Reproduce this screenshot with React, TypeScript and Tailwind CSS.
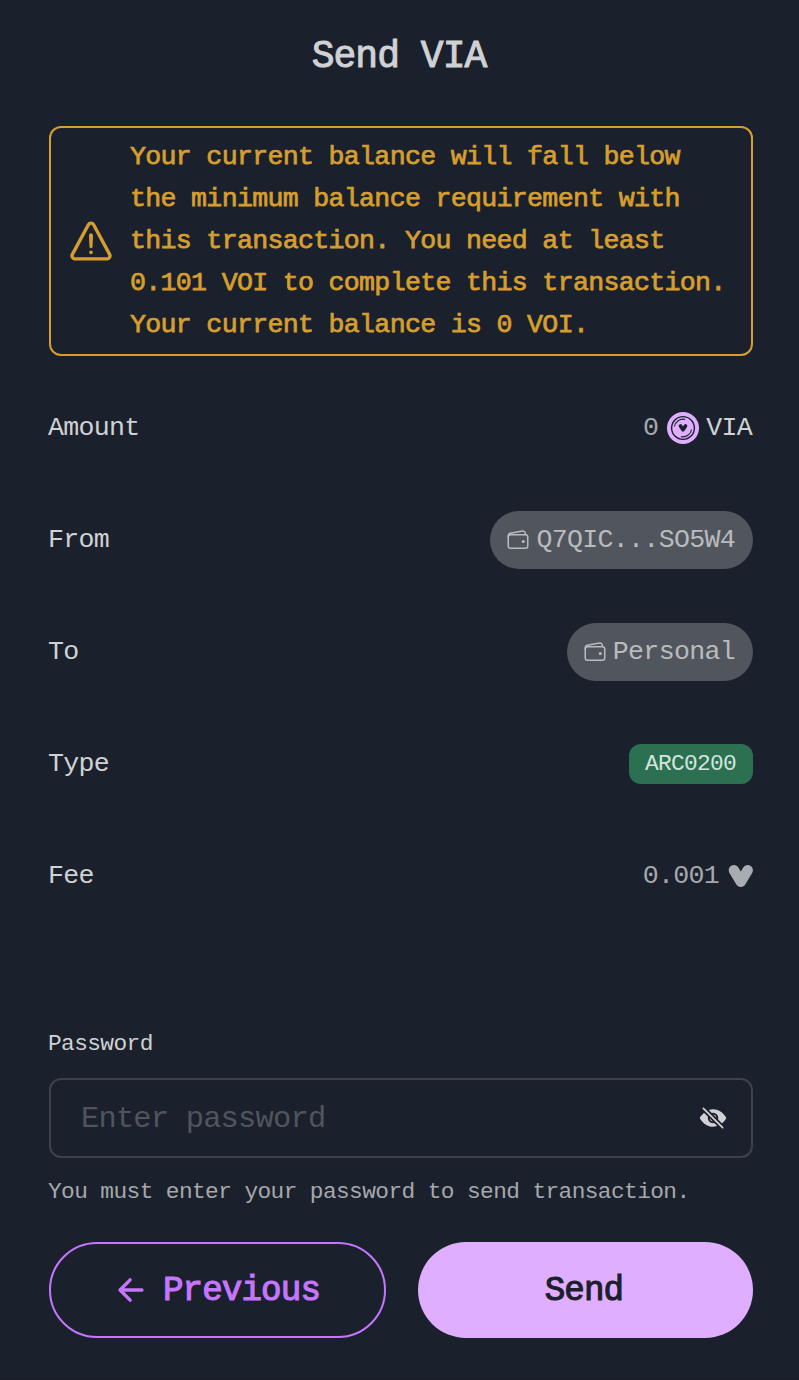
import type { ReactNode } from 'react';
import { IoArrowBackOutline, IoEyeOff, IoWalletOutline, IoWarningOutline } from 'react-icons/io5';

function Row({ label, children }: { label: string; children: ReactNode }) {
  return (
    <div className="flex h-[112px] items-center justify-between text-[26.6px] tracking-[-0.0258em]">
      <span className="-ml-px pt-0.5 text-[#d0d1d4]">{label}</span>
      <div className="flex items-center">{children}</div>
    </div>
  );
}

function AccountPill({ children }: { children: ReactNode }) {
  return (
    <div className="flex h-[58px] items-center rounded-full bg-[#51555d] pl-4 pr-[18px] text-[#b9bbbe]">
      <IoWalletOutline className="mr-[6px] size-6" />
      <span className="pt-0.5">{children}</span>
    </div>
  );
}

function AssetIcon() {
  return (
    <svg className="ml-[9px] mr-[7px] size-8" viewBox="0 0 32 32" fill="none">
      <circle cx="16" cy="16" r="16" fill="#dfaeff" />
      <circle cx="16" cy="16" r="11.4" stroke="#1b212c" strokeWidth="1.4" />
      <path d="M7.4 14.5A8.8 8.8 0 0 1 18 7.4M24.6 17.5A8.8 8.8 0 0 1 14 24.6" stroke="#1b212c" strokeWidth="1.1" />
      <path d="M13.5 14 16 17.8l2.5-3.8" stroke="#1b212c" strokeWidth="3.6" strokeLinecap="round" strokeLinejoin="round" />
    </svg>
  );
}

export default function App() {
  return (
    <main className="flex h-[1380px] w-[799px] flex-col border-b-2 border-[#1a1c27] bg-[#1b212c] pl-[49px] pr-[46px] font-['Liberation_Mono',monospace]">
      <h1 className="mt-[27px] h-[60px] pr-[4px] text-center text-[38px] font-normal leading-[60px] tracking-[-0.0258em] text-[#d0d1d4] [-webkit-text-stroke:1px_currentColor]">
        Send VIA
      </h1>

      <section className="mt-[39px] flex h-[230px] items-center rounded-xl border-2 border-[#d69e2e] pl-4 text-[#d69e2e]">
        <IoWarningOutline className="size-12 shrink-0 [&_path:first-child]:[stroke-width:36px]" />
        <p className="ml-[15px] whitespace-nowrap text-[26.6px] leading-[42px] tracking-[-0.0258em] [-webkit-text-stroke:0.75px_currentColor]">
          Your current balance will fall below<br />
          the minimum balance requirement with<br />
          this transaction. You need at least<br />
          0.101 VOI to complete this transaction.<br />
          Your current balance is 0 VOI.
        </p>
      </section>

      <section className="mt-4">
        <Row label="Amount">
          <span className="pt-0.5 text-[#a6a8ac]">0</span>
          <AssetIcon />
          <span className="mr-px pt-0.5 text-[#d0d1d4]">VIA</span>
        </Row>
        <Row label="From">
          <AccountPill>Q7QIC...SO5W4</AccountPill>
        </Row>
        <Row label="To">
          <AccountPill>Personal</AccountPill>
        </Row>
        <Row label="Type">
          <span className="flex h-10 items-center rounded-xl bg-[#2c7052] pl-4 pr-[17px] pt-px text-[22.8px] text-[#d2e5dc]">ARC0200</span>
        </Row>
        <Row label="Fee">
          <span className="pt-0.5 text-[#a6a8ac]">0.001</span>
          <svg className="ml-[9px] h-6 w-[25px]" viewBox="0 0 25 24" fill="none">
            <path d="M5.9 6.2 12.8 17.7 19.7 6.2" stroke="#a9acb1" strokeWidth="10.4" strokeLinecap="round" strokeLinejoin="round" />
          </svg>
        </Row>
      </section>

      <section className="mt-[94px]">
        <label htmlFor="password" className="-ml-px block h-9 text-[22.8px] leading-9 tracking-[-0.0258em] text-[#d0d1d4]">
          Password
        </label>
        <div className="mt-4 flex h-20 items-center rounded-xl border-2 border-[#3d414b] pl-[30px] pr-6">
          <input
            id="password"
            type="password"
            placeholder="Enter password"
            className="min-w-0 flex-1 bg-transparent pt-[3px] text-[30.4px] tracking-[-0.0258em] outline-none placeholder:text-[#50545d]"
          />
          <IoEyeOff className="size-7 text-[#d0d1d4]" />
        </div>
        <p className="-ml-px mt-4 h-9 whitespace-nowrap text-[22.8px] leading-9 tracking-[-0.0258em] text-[#a6a8ac]">
          You must enter your password to send transaction.
        </p>
      </section>

      <div className="mt-8 flex h-24 gap-8 text-[34.2px] tracking-[-0.0258em] [-webkit-text-stroke:1.1px_currentColor]">
        <button className="flex w-[337px] items-center justify-center rounded-full border-2 border-[#c576ff] text-[#c576ff]">
          <IoArrowBackOutline className="-ml-0.5 mr-[14px] size-9" />
          <span className="pt-1">Previous</span>
        </button>
        <button className="flex flex-1 items-center justify-center rounded-full bg-[#dfaeff] pr-[3px] pt-1 text-[#1b212c]">Send</button>
      </div>
    </main>
  );
}
